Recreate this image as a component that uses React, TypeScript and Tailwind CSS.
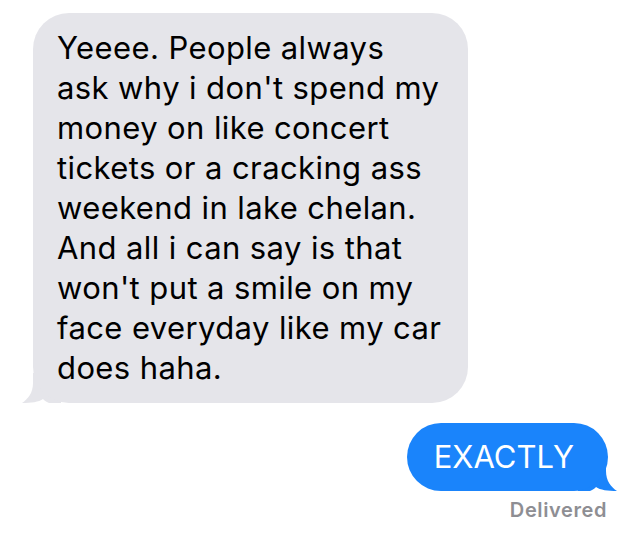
import React from 'react';

const lines = [
  "Yeeee. People always",
  "ask why i don't spend my",
  "money on like concert",
  "tickets or a cracking ass",
  "weekend in lake chelan.",
  "And all i can say is that",
  "won't put a smile on my",
  "face everyday like my car",
  "does haha.",
];

const App: React.FC = () => {
  return (
    <div className="w-[638px] h-[533px] bg-white overflow-hidden flex flex-col font-['Inter',sans-serif]">
      {/* received bubble */}
      <div className="relative ml-[33px] mt-[13px] w-[435px]">
        <svg className="absolute left-[-12px] bottom-0" width="40" height="30" viewBox="0 0 40 30">
          <path d="M12 0 H40 V30 H28 C25 29 23 27 22 26 C18 29 10 30 1 30 C7 26 12 20 12 10 Z" fill="#e5e5ea" />
        </svg>
        <div className="relative rounded-[36px] bg-[#e5e5ea] pl-[24px] pt-[15px] pb-[15px] text-[31px] leading-[40px] tracking-[0.4px] text-black">
          {lines.map((l, i) => (
            <div key={i} className="whitespace-nowrap">{l}</div>
          ))}
        </div>
      </div>

      {/* sent bubble */}
      <div className="relative self-end mr-[30px] mt-[20px]">
        <svg className="absolute right-[-10px] bottom-0" width="40" height="30" viewBox="0 0 40 30">
          <path d="M28 0 H0 V30 H12 C15 29 17 27 18 26 C22 29 30 30 39 30 C33 26 28 20 28 10 Z" fill="#1a84fb" />
        </svg>
        <div className="relative rounded-[34px] bg-[#1a84fb] pl-[27px] pr-[34px] py-[14px] text-[31px] leading-[40px] text-white">
          EXACTLY
        </div>
      </div>

      <div className="self-end mr-[31px] mt-[7px] text-[20px] leading-[24px] font-semibold tracking-[0.6px] text-[#8e8e93]">
        Delivered
      </div>
    </div>
  );
};

export default App;
